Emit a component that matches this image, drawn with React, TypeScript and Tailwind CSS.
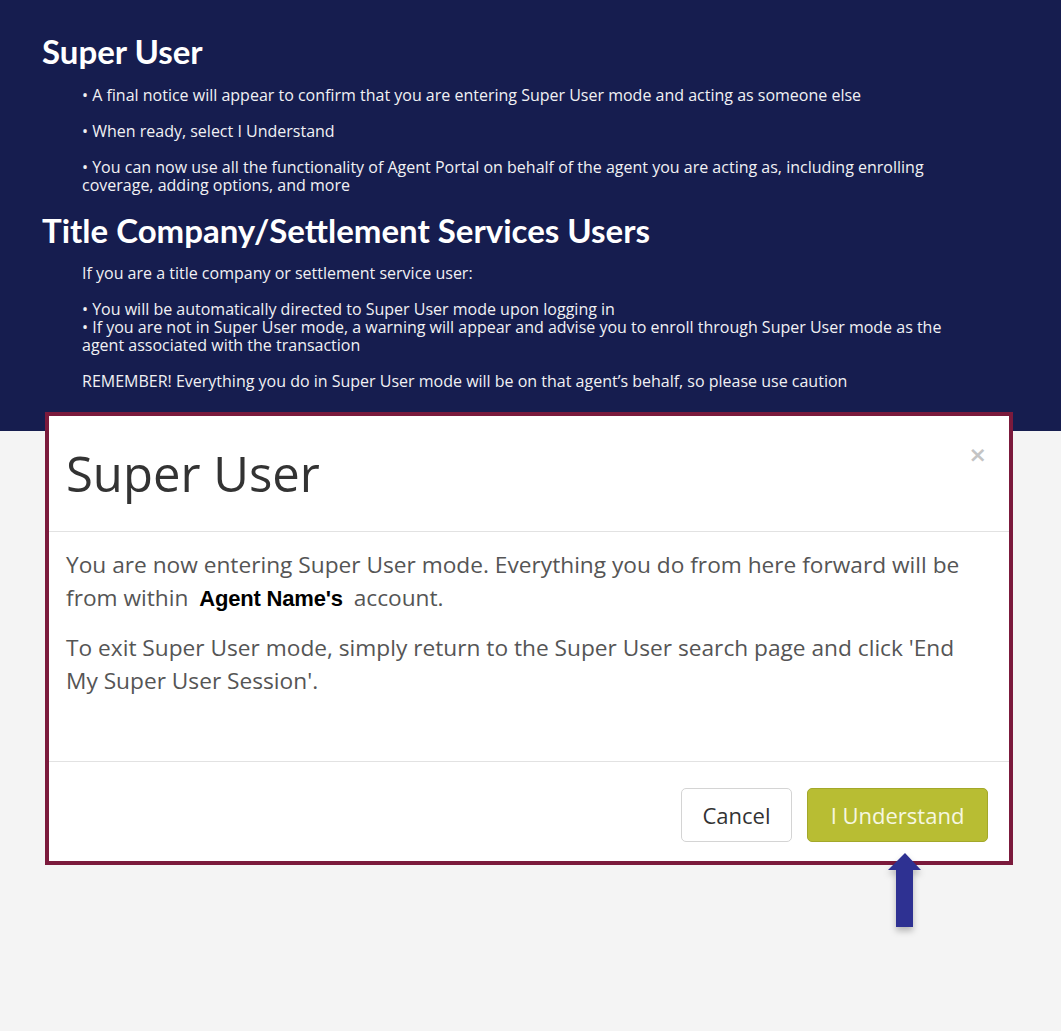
import React from "react";

export default function App() {
  const body = "font-['Open_Sans',sans-serif]";
  return (
    <div className="min-h-[1031px] w-full bg-[#f4f4f4]">
      <div className="bg-[#161d4f] pt-[31px] pb-[41px] text-white">
        <h1 className="ml-[42px] font-['Lato',sans-serif] text-[33px] font-bold leading-[40px] text-white">
          Super User
        </h1>
        <div className={`${body} ml-[82px] mt-[15px] w-[880px] text-[16px] leading-[18px] text-[#f1f1f4]`}>
          <p>• A final notice will appear to confirm that you are entering Super User mode and acting as someone else</p>
          <p className="mt-[18px]">• When ready, select I Understand</p>
          <p className="mt-[18px]">
            • You can now use all the functionality of Agent Portal on behalf of the agent you are acting as, including enrolling coverage, adding options, and more
          </p>
        </div>
        <h2 className="ml-[42px] mt-[16px] font-['Lato',sans-serif] text-[33px] font-bold leading-[40px] text-white">
          Title Company/Settlement Services Users
        </h2>
        <div className={`${body} ml-[82px] mt-[14px] w-[880px] text-[16px] leading-[18px] text-[#f1f1f4]`}>
          <p>If you are a title company or settlement service user:</p>
          <p className="mt-[18px]">
            • You will be automatically directed to Super User mode upon logging in
            <br />• If you are not in Super User mode, a warning will appear and advise you to enroll through Super User mode as the agent associated with the transaction
          </p>
          <p className="mt-[18px]">REMEMBER! Everything you do in Super User mode will be on that agent’s behalf, so please use caution</p>
        </div>
      </div>

      <div className="relative ml-[45px] mt-[-19px] w-[968px] border-[4px] border-[#7b1a3c] bg-white">
        <div className="relative h-[116px] border-b border-[#e2e2e2] pl-[17px] pt-[29px]">
          <div className={`${body} text-[49px] leading-[56px] text-[#333333]`}>Super User</div>
          <div className="absolute right-[22px] top-[24px] font-['DejaVu_Sans',sans-serif] text-[22px] font-bold leading-[30px] text-[#c4c4c4]">
            ×
          </div>
        </div>
        <div className={`${body} h-[230px] border-b border-[#e2e2e2] pl-[17px] pr-[24px] pt-[16px] text-[22.7px] leading-[33px] text-[#555555]`}>
          <p>
            You are now entering Super User mode. Everything you do from here forward will be from within{" "}
            <span className="mx-[5px] inline-block font-['Liberation_Sans',sans-serif] text-[22px] font-bold tracking-[-0.2px] text-black">
              Agent Name's
            </span>{" "}
            account.
          </p>
          <p className="mt-[16px]">
            To exit Super User mode, simply return to the Super User search page and click 'End My Super User Session'.
          </p>
        </div>
        <div className="flex h-[99px] justify-end gap-[15px] pr-[21px] pt-[26px]">
          <button className={`${body} h-[54px] w-[111px] rounded-[5px] border border-[#d4d4d4] bg-white text-[22px] text-[#333333]`}>
            Cancel
          </button>
          <button className={`${body} h-[54px] w-[181px] rounded-[5px] border border-[#a3a82a] bg-[#b8bd33] text-[22px] text-[#f6f7e0]`}>
            I Understand
          </button>
        </div>
        <svg
          className="absolute left-[839px] top-[437px] drop-shadow-[0_4px_3px_rgba(0,0,0,0.25)]"
          width="34"
          height="76"
          viewBox="0 0 34 76"
        >
          <path d="M17 0 L33 17 L25 17 L25 74 L8 74 L8 17 L0 17 Z" fill="#2e3192" />
        </svg>
      </div>
    </div>
  );
}
